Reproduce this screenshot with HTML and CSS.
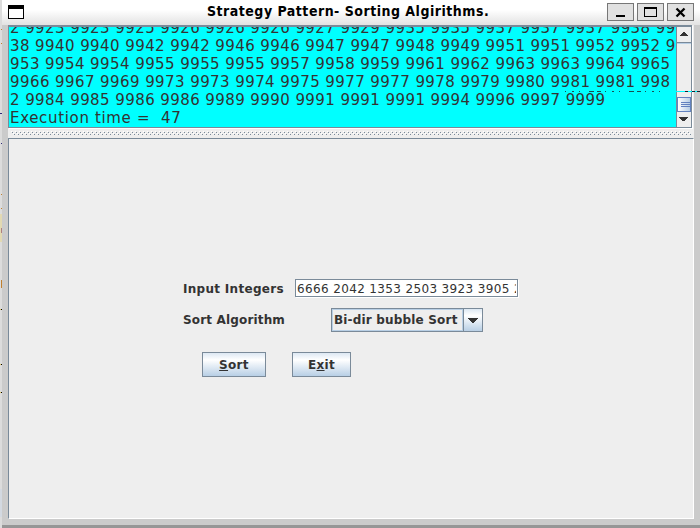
FILE: index.html
```html
<!DOCTYPE html>
<html lang="en">
<head>
<meta charset="utf-8">
<title>Strategy Pattern- Sorting Algirithms.</title>
<link rel="stylesheet" href="styles.css">
</head>
<body>
<svg class="desktop-edge" width="2" height="528" shape-rendering="crispEdges"><path fill="#e2d9b2" d="M0 214h2v28H0z"/><path fill="#c0802f" d="M1 29h1v1H1zM1 43h1v1H1zM1 194h1v1H1zM1 208h1v1H1zM1 280h1v8H1z"/><path fill="#b08080" d="M1 228h1v5H1z"/><path fill="#302878" d="M0 113h2v1H0zM1 143h1v1H1z"/><path fill="#e3c760" d="M0 309h2v1H0zM0 364h2v1H0zM0 392h2v1H0z"/><path d="M1 309h1v1H1zM1 364h1v1H1zM1 392h1v1H1z"/><path fill="#d3d9e1" d="M0 489h2v28H0z"/></svg>
<div class="window">
  <header class="titlebar">
    <svg class="app-icon" width="16" height="14" shape-rendering="crispEdges"><path d="M0 0h16v14H0z"/><path fill="#fff" d="M1 4h14v9H1z"/></svg>
    <h1 class="title">Strategy Pattern- Sorting Algirithms.</h1>
    <div class="controls">
      <span class="control"><svg width="25" height="16" shape-rendering="crispEdges"><path d="M8 11h9v2H8z"/></svg></span>
      <span class="control"><svg width="25" height="16" shape-rendering="crispEdges"><path fill-rule="evenodd" d="M6 3h13v10H6zM7 5v7h11V5z"/></svg></span>
      <span class="control"><svg width="25" height="16"><path d="M8.5 4.5l8 8M16.5 4.5l-8 8" stroke="#000" stroke-width="2.3"/></svg></span>
    </div>
  </header>
  <main class="content">
    <section class="output">
      <div class="lines">
        <p>2 9923 9923 9925 9926 9926 9926 9927 9929 9935 9935 9937 9937 9937 9938 99</p>
        <p>38 9940 9940 9942 9942 9946 9946 9947 9947 9948 9949 9951 9951 9952 9952 9</p>
        <p>953 9954 9954 9955 9955 9955 9957 9958 9959 9961 9962 9963 9963 9964 9965</p>
        <p>9966 9967 9969 9973 9973 9974 9975 9977 9977 9978 9979 9980 9981 9981 998</p>
        <p>2 9984 9985 9986 9986 9989 9990 9991 9991 9991 9994 9996 9997 9999</p>
        <p class="time">Execution time =&nbsp; 47</p>
      </div>
      <div class="scrollbar">
        <span class="arrow up"><svg width="14" height="15" shape-rendering="crispEdges"><path fill="#333" d="M6 5h2v1h1v1h1v1h1v1H3V8h1V7h1V6h1z"/></svg></span>
        <span class="track"></span>
        <span class="thumb"></span>
        <span class="arrow down"><svg width="14" height="14" shape-rendering="crispEdges"><path fill="#333" d="M2 5h9v1h-1v1H9v1H8v1H5V8H4V7H3V6H2z"/></svg></span>
      </div>
      <svg class="artifact" width="135" height="1" shape-rendering="crispEdges"><path stroke="#174f50" stroke-dasharray="1 6 2 5 1 9 5 3 4 4" d="M0 .5h103"/><path stroke="#0ff" d="M110 .5h25"/><path stroke="#123" stroke-dasharray="3 4 3 2" d="M120 .5h15"/></svg>
    </section>
    <div class="divider"><svg width="684" height="5" shape-rendering="crispEdges"><defs><pattern id="bumps" width="4" height="4" patternUnits="userSpaceOnUse"><path fill="#fff" d="M3 0h1v1H3zM1 2h1v1H1z"/><path fill="#7a8a99" d="M0 1h1v1H0zM2 3h1v1H2z"/></pattern></defs><path fill="url(#bumps)" d="M3 0h680v4H3z"/></svg></div>
    <section class="form">
      <div class="row input-row"><label class="label" for="ints">Input Integers</label><div class="field" id="ints"><div class="field-text">6666 2042 1353 2503 3923 3905 2</div></div></div>
      <div class="row algorithm-row"><span class="label">Sort Algorithm</span><div class="combo"><span class="combo-value">Bi-dir bubble Sort</span><span class="combo-arrow"><svg width="10" height="5" shape-rendering="crispEdges"><path fill="#333" d="M0 0h10v1H9v1H8v1H7v1H6v1H4V4H3V3H2V2H1V1H0z"/></svg></span></div></div>
      <div class="row buttons"><button class="button sort"><u>S</u>ort</button><button class="button exit">E<u>x</u>it</button></div>
    </section>
  </main>
</div>
</body>
</html>
```
FILE: styles.css
```css
* { box-sizing: border-box; }
body { margin: 0; width: 700px; height: 528px; overflow: hidden; display: flex; background: #dcdcdc; color: #333; font-family: "DejaVu Sans", sans-serif; }
svg { display: block; }
.desktop-edge { flex: none; }
.window { width: 698px; height: 528px; background: linear-gradient(#cbcbcb 0 525px, #969696 525px); }
.titlebar { height: 25px; display: flex; background: linear-gradient(#fff 0 40%, #e2e2e2); }
.app-icon { margin: 5px 0 0 6px; }
.title { margin: 0 0 0 183px; width: 282px; font: bold 14px/23px "DejaVu Sans Condensed", "DejaVu Sans", sans-serif; letter-spacing: .5px; color: #000; white-space: nowrap; }
.controls { display: flex; gap: 3px; margin: 3px 0 0 118px; }
.control { width: 27px; height: 18px; background: #e1e1e1; border: 1px solid #777; }
.content { margin-left: 6px; width: 686px; height: 494px; background: #eee; display: flex; flex-direction: column; }
.output { height: 103px; width: 684px; display: flex; border: 2px solid #7a8a99; border-left-width: 1px; border-right-width: 1px; border-bottom-width: 1px; box-shadow: 1px 1px #fff; background: #0ff; position: relative; }
.lines { width: 667px; height: 100px; overflow: hidden; padding-left: 1px; display: flex; flex-direction: column; }
.lines p { margin: 0; flex: none; height: 18px; font-size: 15px; line-height: 18px; letter-spacing: .42px; white-space: pre; }
.lines p:first-child { margin-top: -8px; }
.lines .time { letter-spacing: .66px; }
.scrollbar { width: 15px; height: 100px; border-left: 1px solid #7a8a99; background: #eee; display: flex; flex-direction: column; }
.arrow { height: 15px; }
.track { height: 55px; border-top: 1px solid #7a8a99; box-shadow: inset 0 1px #b8cfe5; }
.thumb { height: 15px; border: 1px solid #6382bf; background: repeating-linear-gradient(#6382bf 0 1px, transparent 1px 2px) 3px 4px / 9px 5px no-repeat, linear-gradient(90deg, #fff, #b8cfe5); }
.artifact { position: absolute; left: 556px; top: 64px; }
.divider { height: 10px; padding-top: 3px; }
.form { height: 381px; border: 1px solid #7a8a99; border-right-color: #fff; border-bottom-color: #fff; padding: 140px 0 0 174px; }
.row { display: flex; }
.label { width: 112px; font-weight: bold; font-size: 12px; letter-spacing: .3px; white-space: nowrap; }
.input-row { height: 29px; line-height: 20px; }
.field { width: 223px; height: 18px; border: 1px solid #7a8a99; box-shadow: 1px 1px #fff; background: #fff; padding: 0 1px; font-size: 12px; line-height: 18px; letter-spacing: .36px; }
.field-text { height: 16px; overflow: hidden; white-space: nowrap; }
.algorithm-row { height: 44px; line-height: 24px; }
.algorithm-row .label { width: 148px; letter-spacing: .16px; }
.combo { display: flex; width: 152px; height: 24px; border: 1px solid #7a8a99; font-size: 12px; font-weight: bold; line-height: 20px; letter-spacing: .18px; }
.combo-value { width: 131px; height: 22px; border: 1px solid #b8cfe5; padding-left: 1px; white-space: nowrap; }
.combo-arrow { width: 19px; border-left: 1px solid #7a8a99; background: linear-gradient(#dde8f3, #fff 30%, #b8cfe5); padding: 9px 0 0 4px; }
.button { height: 25px; border: 1px solid #7a8a99; border-radius: 0; padding: 0; margin: 0; background: linear-gradient(#dde8f3, #fff 30%, #b8cfe5); color: #333; font: bold 12px/22px "DejaVu Sans", sans-serif; letter-spacing: .3px; }
.buttons { padding-left: 19px; gap: 26px; }
.sort { width: 64px; }
.exit { width: 59px; }
```
